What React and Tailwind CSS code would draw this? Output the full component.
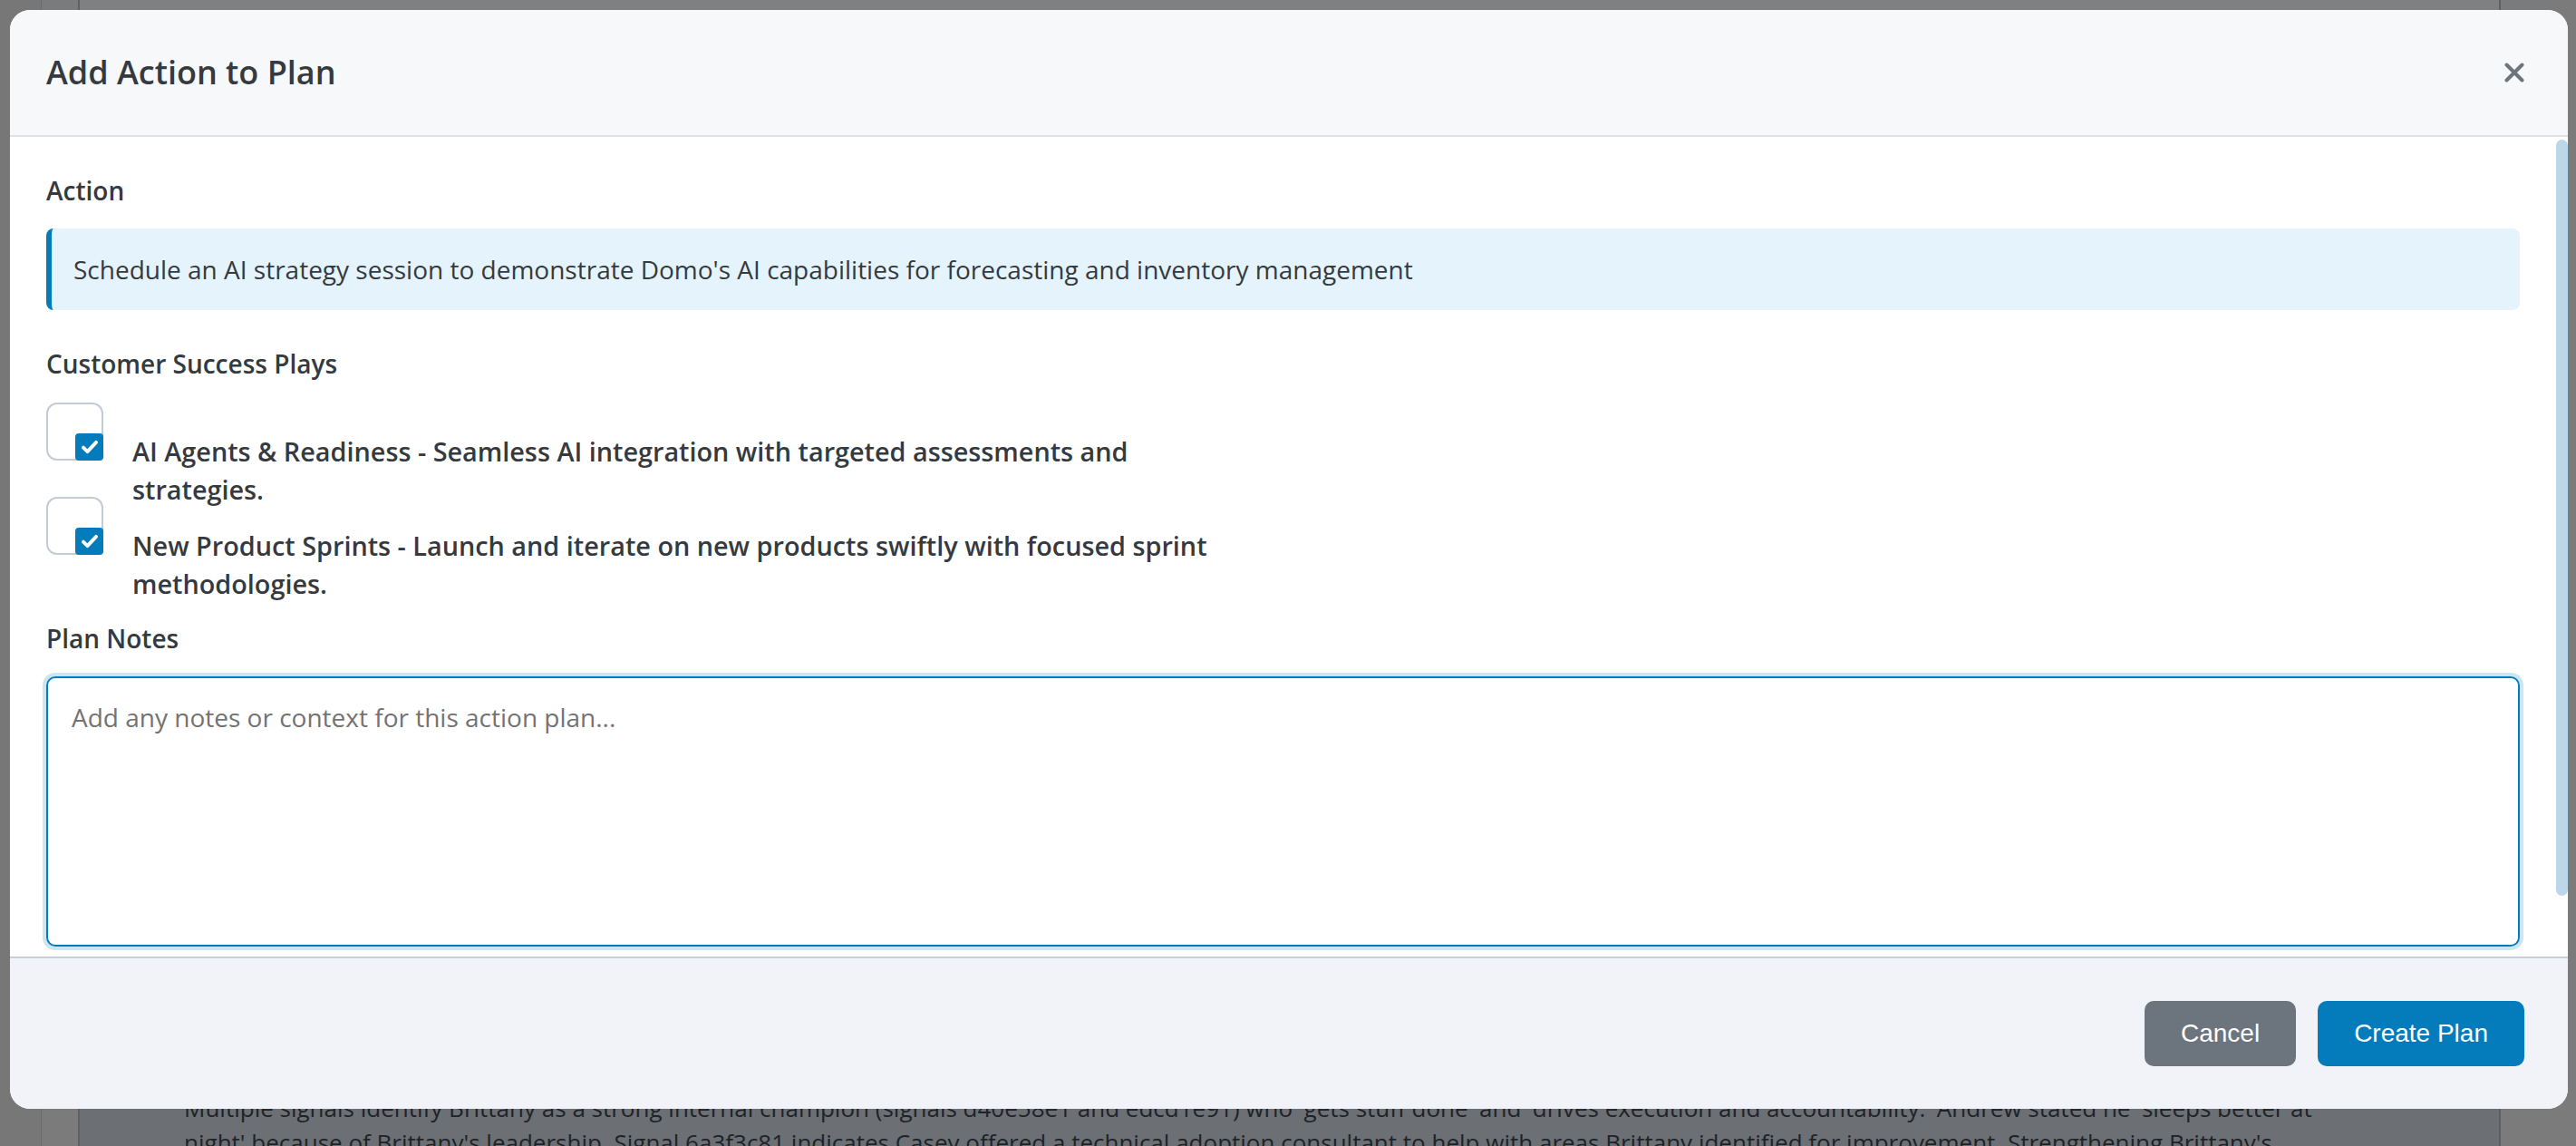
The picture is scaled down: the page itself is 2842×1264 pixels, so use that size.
import React from 'react'

const plays = [
  'AI Agents & Readiness - Seamless AI integration with targeted assessments and strategies.',
  'New Product Sprints - Launch and iterate on new products swiftly with focused sprint methodologies.',
]

function CheckIcon() {
  return (
    <svg width="24" height="24" viewBox="0 0 16 16" fill="none">
      <path d="M3.3 8.4l3 3L12.7 4.6" stroke="white" strokeWidth="2.6" strokeLinecap="round" strokeLinejoin="round" />
    </svg>
  )
}

function PlayRow({ text, first }) {
  return (
    <div className={first ? 'flex items-start gap-[32px]' : 'flex items-start gap-[32px] -mt-[13px]'}>
      <div className="flex h-[64px] w-[63px] shrink-0 items-end justify-end rounded-[12px] border-2 border-[#c3ccd6]">
        <div className="-mb-[2px] -mr-[2px] flex h-[30px] w-[31px] items-center justify-center rounded-[4px] bg-[#047cbb]">
          <CheckIcon />
        </div>
      </div>
      <p className="mt-[33px] max-w-[1214px] text-[28.8px] font-semibold leading-[42px] text-[#343a40]">{text}</p>
    </div>
  )
}

export default function App() {
  return (
    <div className="relative h-[1264px] w-[2842px] overflow-hidden bg-[#808080] font-['Open_Sans',sans-serif]">
      {/* dimmed page behind the dialog */}
      <div className="flex h-full">
        <div className="w-[46px] border-r border-[#6c6c6c] bg-[#777777]" />
        <div className="w-[42px] border-r-2 border-[#5d6167] bg-[#7b7b7b]" />
        <div className="flex flex-1 flex-col">
          <div className="mt-auto h-[160px] overflow-hidden bg-[#6c7075] pl-[115px] pt-[99px] text-[26px] leading-[38px] text-[#1f2327]">
            <p className="whitespace-nowrap">Multiple signals identify Brittany as a strong internal champion (signals d40e58e1 and edcd1e91) who 'gets stuff done' and 'drives execution and accountability.' Andrew stated he 'sleeps better at</p>
            <p className="whitespace-nowrap">night' because of Brittany's leadership. Signal 6a3f3c81 indicates Casey offered a technical adoption consultant to help with areas Brittany identified for improvement. Strengthening Brittany's</p>
          </div>
        </div>
        <div className="w-[85px] border-l-2 border-[#5d6167] bg-[#7b7b7b]" />
      </div>

      {/* dialog */}
      <div className="absolute left-[11px] top-[11px] flex w-[2822px] flex-col overflow-hidden rounded-[22px] bg-white">
        <div className="flex h-[140px] items-center justify-between border-b-2 border-[#dee2e6] bg-[#f7f8fa] pl-[40px] pr-[48px]">
          <h2 className="text-[36px] font-semibold leading-none text-[#343a40]">Add Action to Plan</h2>
          <button className="flex h-[22px] w-[22px] items-center justify-center">
            <svg width="22" height="22" viewBox="0 0 22 22" fill="none">
              <path d="M2.5 2.5l17 17M19.5 2.5l-17 17" stroke="#6c757d" strokeWidth="4" strokeLinecap="round" />
            </svg>
          </button>
        </div>

        <div className="flex h-[904px] overflow-hidden">
          <div className="flex-1 px-[40px] pt-[38px]">
            <div className="mb-[20px] text-[28px] font-semibold leading-[43px] text-[#343a40]">Action</div>
            <div className="rounded-[8px] border-l-[6px] border-[#047cbb] bg-[#e5f4fc] py-[24px] pl-[24px] text-[28px] leading-[42px] text-[#343a40]">
              Schedule an AI strategy session to demonstrate Domo's AI capabilities for forecasting and inventory management
            </div>

            <div className="mt-[38px] text-[28px] font-semibold leading-[43px] text-[#343a40]">Customer Success Plays</div>
            <div className="mt-[21px] flex flex-col">
              {plays.map((p, i) => (
                <PlayRow key={p} text={p} first={i === 0} />
              ))}
            </div>

            <div className="mt-[18px] text-[28px] font-semibold leading-[43px] text-[#343a40]">Plan Notes</div>
            <textarea
              autoFocus
              placeholder="Add any notes or context for this action plan..."
              className="mt-[20px] block h-[298px] w-full resize-none rounded-[10px] border-2 border-[#047cbb] px-[26px] pt-[22px] text-[28px] leading-[42px] text-[#343a40] shadow-[0_0_0_4px_rgba(4,124,187,0.2)] outline-none placeholder:text-[#737373]"
            />
          </div>
          <div className="w-[13px] pt-[3px]">
            <div className="h-[834px] w-full rounded-full bg-[#bcd7ea]" />
          </div>
        </div>

        <div className="flex h-[168px] items-center justify-end gap-[24px] border-t-2 border-[#c8cfd8] bg-[#f1f3f8] pr-[48px] font-['Liberation_Sans',Arial,sans-serif]">
          <button className="h-[72px] rounded-[10px] bg-[#6c757d] px-[40px] text-[28px] text-white">Cancel</button>
          <button className="h-[72px] rounded-[10px] bg-[#047cbb] px-[40px] text-[28px] text-white">Create Plan</button>
        </div>
      </div>
    </div>
  )
}
